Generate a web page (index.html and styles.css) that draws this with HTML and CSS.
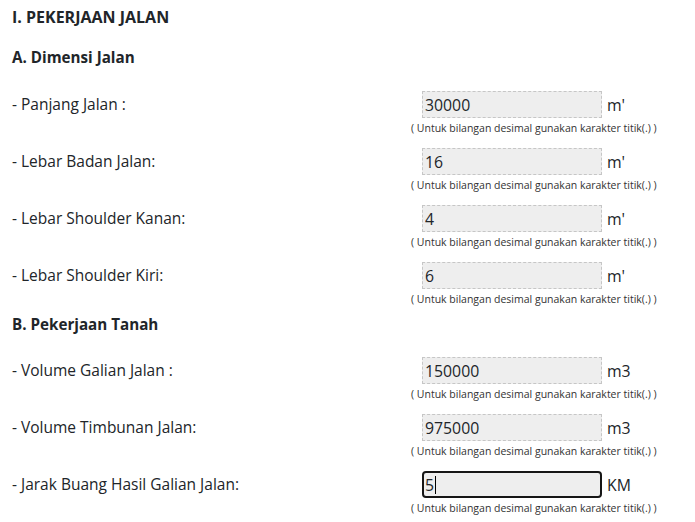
FILE: index.html
```html
<!DOCTYPE html>
<html>
<head>
<meta charset="utf-8">
<link rel="stylesheet" href="styles.css">
</head>
<body>
<div class="page">
  <h1 class="title">I. PEKERJAAN JALAN</h1>
  <h2 class="sub">A. Dimensi Jalan</h2>

  <div class="row">
    <div class="label">- Panjang Jalan :</div>
    <div class="field">
      <div class="inline"><input class="inp" type="text" value="30000"><span class="unit">m'</span></div>
      <div class="hint">( Untuk bilangan desimal gunakan karakter titik(.) )</div>
    </div>
  </div>
  <div class="row">
    <div class="label">- Lebar Badan Jalan:</div>
    <div class="field">
      <div class="inline"><input class="inp" type="text" value="16"><span class="unit">m'</span></div>
      <div class="hint">( Untuk bilangan desimal gunakan karakter titik(.) )</div>
    </div>
  </div>
  <div class="row">
    <div class="label">- Lebar Shoulder Kanan:</div>
    <div class="field">
      <div class="inline"><input class="inp" type="text" value="4"><span class="unit">m'</span></div>
      <div class="hint">( Untuk bilangan desimal gunakan karakter titik(.) )</div>
    </div>
  </div>
  <div class="row">
    <div class="label">- Lebar Shoulder Kiri:</div>
    <div class="field">
      <div class="inline"><input class="inp" type="text" value="6"><span class="unit">m'</span></div>
      <div class="hint">( Untuk bilangan desimal gunakan karakter titik(.) )</div>
    </div>
  </div>

  <h2 class="sub sub-b">B. Pekerjaan Tanah</h2>

  <div class="row">
    <div class="label">- Volume Galian Jalan :</div>
    <div class="field">
      <div class="inline"><input class="inp" type="text" value="150000"><span class="unit">m3</span></div>
      <div class="hint">( Untuk bilangan desimal gunakan karakter titik(.) )</div>
    </div>
  </div>
  <div class="row">
    <div class="label">- Volume Timbunan Jalan:</div>
    <div class="field">
      <div class="inline"><input class="inp" type="text" value="975000"><span class="unit">m3</span></div>
      <div class="hint">( Untuk bilangan desimal gunakan karakter titik(.) )</div>
    </div>
  </div>
  <div class="row">
    <div class="label">- Jarak Buang Hasil Galian Jalan:</div>
    <div class="field">
      <div class="inline"><span class="inp-wrap"><input class="inp inp-focus" type="text" value="5"><span class="caret"></span></span><span class="unit">KM</span></div>
      <div class="hint">( Untuk bilangan desimal gunakan karakter titik(.) )</div>
    </div>
  </div>
</div>
</body>
</html>
```

FILE: styles.css
```css
* { box-sizing: border-box; }
body {
  margin: 0;
  font-family: "Open Sans", "Noto Sans", sans-serif;
  color: #212529;
  background: #fff;
}
.page {
  padding: 7px 12px 0 12px;
}
.title {
  font-size: 16px;
  font-weight: 700;
  line-height: 20px;
  margin: 0 0 20px 0;
}
.sub {
  font-size: 15.2px;
  font-weight: 700;
  line-height: 20px;
  margin: 0 0 24px 0;
}
.sub-b {
  margin-top: -5px;
  margin-bottom: 23px;
}
.row {
  display: grid;
  grid-template-columns: 399px auto;
  margin-bottom: 13px;
}
.label {
  font-size: 15.5px;
  line-height: 27px;
}
.field {
  display: flex;
  flex-direction: column;
}
.inline {
  display: flex;
  align-items: center;
  margin-left: 11px;
  height: 27px;
}
.inp {
  width: 180px;
  height: 27px;
  border: 1px dashed #c6c6c6;
  background: #eeeeee;
  font-family: "Open Sans", "Noto Sans", sans-serif;
  font-size: 15.8px;
  color: #212529;
  padding: 0 2px;
  margin: 0;
  outline: none;
}
.inp-wrap {
  position: relative;
  display: inline-block;
  height: 27px;
}
.inp-focus {
  border: 2px solid #161616;
  border-radius: 4px;
  padding: 0 1px;
}
.caret {
  position: absolute;
  left: 13px;
  top: 5px;
  width: 1px;
  height: 18px;
  background: #000;
}
.unit {
  font-size: 15.8px;
  margin-left: 5px;
}
.hint {
  font-size: 10.5px;
  line-height: 13px;
  color: #333;
  margin-top: 4px;
  white-space: nowrap;
}
```
